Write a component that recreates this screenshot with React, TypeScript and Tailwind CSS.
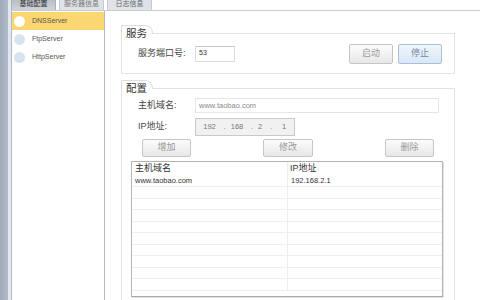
import type { ReactNode } from "react";

const btn =
  "flex items-center justify-center rounded-[2px] border border-[#c6c6c6] bg-linear-to-b from-[#fcfcfc] to-[#e7e7e7] text-[9px] text-[#9a9a9a]";

function Group({ title, className, children }: { title: string; className?: string; children: ReactNode }) {
  return (
    <div className={className}>
      <div className="relative z-10 h-[9px] w-[32px] rounded-tr-[8px] border-l border-r border-t border-[#dedede] bg-white pl-[4px] text-[10.5px] leading-[15px] whitespace-nowrap text-[#333]">
        {title}
      </div>
      <div className="-mt-[1px] border border-[#e2e2e2]">{children}</div>
    </div>
  );
}

const servers = ["DNSServer", "FtpServer", "HttpServer"];

export default function App() {
  const rows = Array.from({ length: 10 });
  return (
    <div className="flex h-[300px] w-[480px] overflow-hidden bg-white font-['Liberation_Sans','Noto_Sans_CJK_SC',sans-serif]">
      <div className="w-[8px] shrink-0 bg-linear-to-r from-[#9eaab9] to-[#b1bbc8]" />
      <div className="w-[3px] shrink-0 bg-[#e1e6f0]" />
      <div className="flex min-w-0 flex-1 flex-col">
        {/* tabs */}
        <div className="flex h-[10px] shrink-0 gap-[3px] overflow-hidden">
          <div className="flex w-[45px] items-center justify-center border-x border-[#a9afb8] bg-linear-to-b from-[#b9bfc8] to-[#cfd3da] pb-[4px] text-[7px] leading-[7px] text-[#333]">
            基础配置
          </div>
          <div className="flex w-[45px] items-center justify-center border-x border-[#c6cad0] bg-[#dfe2e6] pb-[4px] text-[7px] leading-[7px] text-[#777]">
            服务器信息
          </div>
          <div className="flex w-[45px] items-center justify-center border-x border-[#c6cad0] bg-[#dfe2e6] pb-[4px] text-[7px] leading-[7px] text-[#666]">
            日志信息
          </div>
        </div>

        <div className="flex min-h-0 flex-1 border-t border-[#c9cdd3]">
          {/* server list */}
          <div className="w-[94px] shrink-0 border-x border-[#b3b9c2] bg-white pt-[1px]">
            {servers.map((s, i) => (
              <div
                key={s}
                className={`flex h-[18px] items-center gap-[7px] pl-[2px] text-[7px] text-[#555] ${i === 0 ? "bg-[#fbd772]" : ""}`}
              >
                <span
                  className={`h-[11px] w-[11px] rounded-full ${i === 0 ? "bg-white shadow-[0_0_2px_#f3c85a]" : "bg-[#d9e3ee]"}`}
                />
                {s}
              </div>
            ))}
          </div>

          {/* content */}
          <div className="flex min-w-0 flex-1 flex-col overflow-hidden pl-[16px]">
            <Group title="服务" className="mt-[14px] w-[334px]">
              <div className="flex h-[39px] items-center pl-[16px] pr-[12px]">
                <div className="w-[57px] text-[9px] text-[#444]">服务端口号:</div>
                <div className="flex h-[16px] w-[40px] items-center border border-[#dcdcdc] border-t-[#c8c8c8] pl-[3px] text-[7px] text-[#333]">
                  53
                </div>
                <div className="flex-1" />
                <div className="flex gap-[5px]">
                  <div className={`${btn} h-[20px] w-[44px]`}>启动</div>
                  <div className="flex h-[20px] w-[44px] items-center justify-center rounded-[2px] border border-[#a9c0da] bg-linear-to-b from-[#eff6fd] to-[#dae7f5] text-[9px] text-[#6f88a3]">
                    停止
                  </div>
                </div>
              </div>
            </Group>

            <Group title="配置" className="mt-[6px] w-[334px]">
              <div className="flex h-[230px] flex-col pt-[9px]">
                <div className="flex h-[15px] items-center pl-[16px]">
                  <div className="w-[57px] text-[9px] text-[#444]">主机域名:</div>
                  <div className="flex h-[15px] w-[244px] items-center border border-[#e6e6e6] pl-[3px] text-[7.5px] text-[#8a8a8a]">
                    www.taobao.com
                  </div>
                </div>
                <div className="mt-[5px] flex h-[18px] items-center pl-[16px]">
                  <div className="w-[57px] text-[9px] text-[#444]">IP地址:</div>
                  <div className="flex h-[18px] w-[100px] items-center border border-[#c9c9c9] bg-[#f1f1f1] text-[7.5px] text-[#777]">
                    <span className="w-[27px] text-center">192</span>
                    <span className="w-[3px] text-center">.</span>
                    <span className="w-[22px] text-center">168</span>
                    <span className="w-[8px] text-center">.</span>
                    <span className="w-[8px] text-center">2</span>
                    <span className="w-[14px] text-center">.</span>
                    <span className="w-[12px] text-center">1</span>
                  </div>
                </div>
                <div className="mt-[3px] flex h-[18px] justify-between px-[20px]">
                  <div className={`${btn} w-[49px]`}>增加</div>
                  <div className={`${btn} w-[50px]`}>修改</div>
                  <div className={`${btn} w-[49px]`}>删除</div>
                </div>

                {/* table */}
                <div className="ml-[9px] mt-[4px] flex h-[136px] w-[312px] flex-col overflow-hidden border border-[#b4b4b4] border-b-[#a8a8a8] bg-white shadow-[1px_1px_0_#e4e4e4]">
                  <div className="flex h-[13.5px] shrink-0 items-center text-[9px] text-[#333]">
                    <div className="w-[155px] pl-[3px]">主机域名</div>
                    <div className="flex-1 border-l border-[#eeeeee] pl-[2px]">IP地址</div>
                  </div>
                  {rows.map((_, i) => (
                    <div key={i} className="flex h-[11.5px] shrink-0 border-b border-[#efefef] text-[7.5px] text-[#333]">
                      <div className="flex w-[155px] items-center pl-[3px]">{i === 0 ? "www.taobao.com" : ""}</div>
                      <div className="flex flex-1 items-center border-l border-[#eeeeee] pl-[3px]">{i === 0 ? "192.168.2.1" : ""}</div>
                    </div>
                  ))}
                </div>
              </div>
            </Group>
          </div>
        </div>
      </div>
    </div>
  );
}
